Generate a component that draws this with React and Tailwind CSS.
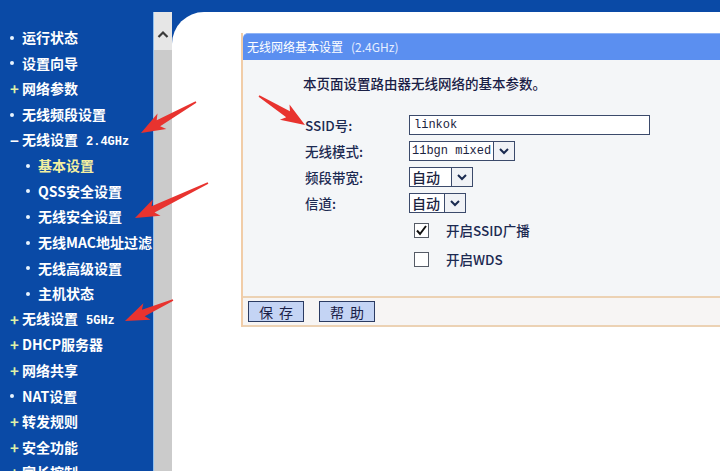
import React from 'react'

const menu = [
  { mark: 'dot', text: '运行状态' },
  { mark: 'dot', text: '设置向导' },
  { mark: 'plus', text: '网络参数' },
  { mark: 'dot', text: '无线频段设置' },
  { mark: 'minus', text: '无线设置', tag: '2.4GHz' },
  { mark: 'dot', text: '基本设置', sub: true, active: true },
  { mark: 'dot', text: 'QSS安全设置', sub: true },
  { mark: 'dot', text: '无线安全设置', sub: true },
  { mark: 'dot', text: '无线MAC地址过滤', sub: true },
  { mark: 'dot', text: '无线高级设置', sub: true },
  { mark: 'dot', text: '主机状态', sub: true },
  { mark: 'plus', text: '无线设置', tag: '5GHz' },
  { mark: 'plus', text: 'DHCP服务器' },
  { mark: 'plus', text: '网络共享' },
  { mark: 'dot', text: 'NAT设置' },
  { mark: 'plus', text: '转发规则' },
  { mark: 'plus', text: '安全功能' },
  { mark: 'plus', text: '家长控制' },
]

const arrows = [
  [196, 102, 141, 133],
  [208, 183, 135, 218],
  [173, 300, 125, 321],
  [259, 96, 305, 125],
]

function arrowPoints([x1, y1, x2, y2]) {
  const dx = x2 - x1
  const dy = y2 - y1
  const len = Math.hypot(dx, dy)
  const ux = dx / len
  const uy = dy / len
  const nx = -uy
  const ny = ux
  const head = 20
  const bx = x2 - ux * head
  const by = y2 - uy * head
  const bx2 = x2 - ux * (head + 4)
  const by2 = y2 - uy * (head + 4)
  const pts = [
    [x1 + nx * 0.8, y1 + ny * 0.8],
    [bx + nx * 3.5, by + ny * 3.5],
    [bx2 + nx * 9, by2 + ny * 9],
    [x2, y2],
    [bx2 - nx * 9, by2 - ny * 9],
    [bx - nx * 3.5, by - ny * 3.5],
    [x1 - nx * 0.8, y1 - ny * 0.8],
  ]
  return pts.map(p => p.join(',')).join(' ')
}

const Mark = ({ type }) => {
  if (type === 'plus') return <span className="w-[10px] text-[#dff0a8] text-[15px] font-bold leading-none">+</span>
  if (type === 'minus') return <span className="w-[10px] text-white text-[15px] font-bold leading-none">−</span>
  return (
    <span className="w-[10px] flex items-center">
      <span className="block w-[4px] h-[4px] rounded-full bg-[#e8f4ff]" />
    </span>
  )
}

const Chevron = () => (
  <svg width="12" height="8" viewBox="0 0 12 8">
    <path d="M2 2 L6 6 L10 2" fill="none" stroke="#1a2a50" strokeWidth="2" />
  </svg>
)

const Select = ({ value, width, mono }) => (
  <div className={`flex h-[20px] border border-[#3b4a6b] bg-white ${width}`}>
    <span
      className={`flex-1 flex items-center pl-[2px] text-[#1a2340] ${mono ? 'text-[12px]' : 'text-[14px]'}`}
      style={{ fontFamily: mono ? '"Liberation Mono", monospace' : undefined }}
    >
      {value}
    </span>
    <span className="w-[21px] flex items-center justify-center border-l border-[#3b4a6b] bg-[#f0f2f6]">
      <Chevron />
    </span>
  </div>
)

const Checkbox = ({ checked }) => (
  <span className="w-[15px] h-[15px] border border-[#555b66] bg-white flex items-center justify-center">
    {checked && (
      <svg width="13" height="13" viewBox="0 0 13 13">
        <path d="M2 6.5 L5 10 L11 2" fill="none" stroke="#111" strokeWidth="2" />
      </svg>
    )}
  </span>
)

export default function App() {
  return (
    <div
      className="relative w-[720px] h-[471px] overflow-hidden bg-[#0a4aa6] flex"
      style={{ fontFamily: '"Noto Sans CJK SC", "Noto Sans", sans-serif' }}
    >
      {/* sidebar */}
      <div className="w-[153px] pt-[25px] shrink-0">
        {menu.map((m, i) => (
          <div
            key={i}
            className={`h-[25.6px] flex items-center gap-[2px] ${m.sub ? 'pl-[26px]' : 'pl-[10px]'}`}
          >
            <Mark type={m.mark} />
            <span
              className={`text-[14px] font-bold whitespace-nowrap ${m.active ? 'text-[#f4f0a0]' : 'text-white'}`}
            >
              {m.text}
              {m.tag && (
                <span className="ml-[8px] text-[12px] font-bold" style={{ fontFamily: '"Liberation Mono", monospace' }}>
                  {m.tag}
                </span>
              )}
            </span>
          </div>
        ))}
      </div>

      {/* scrollbar */}
      <div className="w-[19px] mt-[12px] flex flex-col border-l border-[#8fc0f0] shrink-0">
        <div className="h-[38px] bg-[#e6e6e6] flex justify-center pt-[18px]">
          <svg width="12" height="8" viewBox="0 0 12 8">
            <path d="M1.5 7 L6 2.5 L10.5 7" fill="none" stroke="#3a3a3a" strokeWidth="2.2" />
          </svg>
        </div>
        <div className="flex-1 bg-[#cbcbcb]" />
      </div>

      {/* content */}
      <div className="flex-1 mt-[12px] bg-white rounded-tl-[32px] pl-[69px] pt-[21px] overflow-hidden">
        <div className="w-[480px] border-l-2 border-[#f1cda8]">
          <div className="h-[27px] bg-[#5b8ff0] border-t border-[#8fb4f6] rounded-tl-[5px] flex items-center px-[4px] text-[12px] text-white">
            无线网络基本设置
            <span className="ml-[8px] text-[#e6eeff]">(2.4GHz)</span>
          </div>

          <div className="h-[236px] bg-[#f4f6f8] pt-[14px]">
            <div className="pl-[60px] text-[13.5px] font-medium leading-[18px] text-[#1a2046]">
              本页面设置路由器无线网络的基本参数。
            </div>

            <div className="mt-[20px] pl-[62px] text-[13.5px] font-medium text-[#1c2a52]">
              <div className="h-[26px] flex items-center">
                <span className="w-[104px]">SSID号:</span>
                <div className="w-[241px] h-[20px] border border-[#3b4a6b] bg-white flex items-center pl-[4px]">
                  <span className="text-[12px] text-[#1a2340]" style={{ fontFamily: '"Liberation Mono", monospace' }}>
                    linkok
                  </span>
                </div>
              </div>
              <div className="h-[26px] flex items-center">
                <span className="w-[104px]">无线模式:</span>
                <Select value="11bgn mixed" width="w-[106px]" mono />
              </div>
              <div className="h-[26px] flex items-center">
                <span className="w-[104px]">频段带宽:</span>
                <Select value="自动" width="w-[64px]" />
              </div>
              <div className="h-[26px] flex items-center">
                <span className="w-[104px]">信道:</span>
                <Select value="自动" width="w-[57px]" />
              </div>
              <div className="h-[29px] flex items-center pl-[109px] gap-[17px]">
                <Checkbox checked />
                <span>开启SSID广播</span>
              </div>
              <div className="h-[29px] flex items-center pl-[109px] gap-[17px]">
                <Checkbox />
                <span>开启WDS</span>
              </div>
            </div>
          </div>

          <div className="h-[31px] bg-[#f7f5f4] border-t-2 border-b-2 border-[#ecd2b4] flex items-center pl-[5px] gap-[15px]">
            <button className="w-[56px] h-[21px] bg-[#c4d4f4] border border-[#2b3b62] text-[14px] text-[#1a2046] tracking-[6px] pl-[6px] leading-none">
              保存
            </button>
            <button className="w-[56px] h-[21px] bg-[#c4d4f4] border border-[#2b3b62] text-[14px] text-[#1a2046] tracking-[6px] pl-[6px] leading-none">
              帮助
            </button>
          </div>
        </div>
      </div>

      {/* annotation arrows */}
      <svg className="absolute inset-0 pointer-events-none" width="720" height="471">
        {arrows.map((a, i) => (
          <polygon key={i} points={arrowPoints(a)} fill="#e8332f" />
        ))}
      </svg>
    </div>
  )
}
